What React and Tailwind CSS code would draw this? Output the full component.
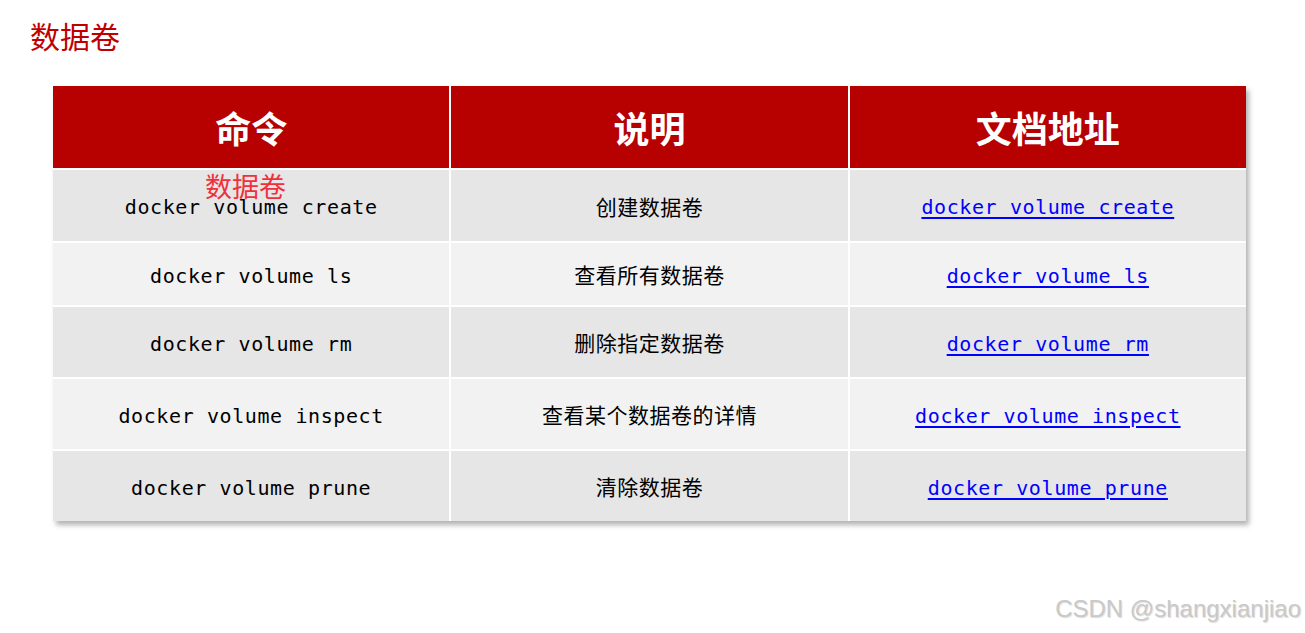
import React from 'react';

const rows = [
  { cmd: 'docker volume create', desc: '创建数据卷', h: 'h-[71px]', bg: 'bg-[#e6e6e6]' },
  { cmd: 'docker volume ls', desc: '查看所有数据卷', h: 'h-[62px]', bg: 'bg-[#f2f2f2]' },
  { cmd: 'docker volume rm', desc: '删除指定数据卷', h: 'h-[70px]', bg: 'bg-[#e6e6e6]' },
  { cmd: 'docker volume inspect', desc: '查看某个数据卷的详情', h: 'h-[70px]', bg: 'bg-[#f2f2f2]' },
  { cmd: 'docker volume prune', desc: '清除数据卷', h: 'h-[70px]', bg: 'bg-[#e6e6e6]' },
];

const cjk = "font-['Noto_Sans_CJK_SC',sans-serif]";
const mono = "font-['DejaVu_Sans_Mono',monospace] text-[20px] tracking-[0.6px]";

export default function App() {
  return (
    <div className="relative w-[1305px] h-[633px] bg-white overflow-hidden">
      {/* Title */}
      <h1 className={`${cjk} pl-[30px] pt-[13px] text-[30px] leading-[44px] text-[#c00000]`}>
        数据卷
      </h1>

      {/* Table */}
      <div className="relative ml-[53px] mt-[29px] w-[1193px] bg-white shadow-[3px_4px_5px_rgba(0,0,0,0.3)]">
        <div className="grid grid-cols-3 gap-[2px]">
          {['命令', '说明', '文档地址'].map((t) => (
            <div
              key={t}
              className={`${cjk} h-[82px] bg-[#b70000] flex items-center justify-center text-white text-[36px] font-bold`}
            >
              {t}
            </div>
          ))}
          {rows.map((r) => (
            <React.Fragment key={r.cmd}>
              <div className={`${r.h} ${r.bg} ${mono} flex items-center justify-center pt-[3px] text-black`}>
                {r.cmd}
              </div>
              <div className={`${r.h} ${r.bg} ${cjk} flex items-center justify-center pt-[2px] text-[21px] tracking-[0.5px] text-black`}>
                {r.desc}
              </div>
              <div className={`${r.h} ${r.bg} flex items-center justify-center pt-[3px]`}>
                <a href="#" className={`${mono} text-[#0000ff] underline underline-offset-[3px]`}>
                  {r.cmd}
                </a>
              </div>
            </React.Fragment>
          ))}
        </div>

        {/* Floating label over first row */}
        <span className={`${cjk} absolute left-[152px] top-[80px] text-[27px] leading-[40px] text-[#f0303c]`}>
          数据卷
        </span>
      </div>

      {/* Watermark */}
      <span className="absolute right-[4px] bottom-[6px] font-['Liberation_Sans',Arial,sans-serif] text-[24px] text-[#c9c9c9] [text-shadow:1px_1px_1px_rgba(0,0,0,0.15)]">
        CSDN @shangxianjiao
      </span>
    </div>
  );
}
